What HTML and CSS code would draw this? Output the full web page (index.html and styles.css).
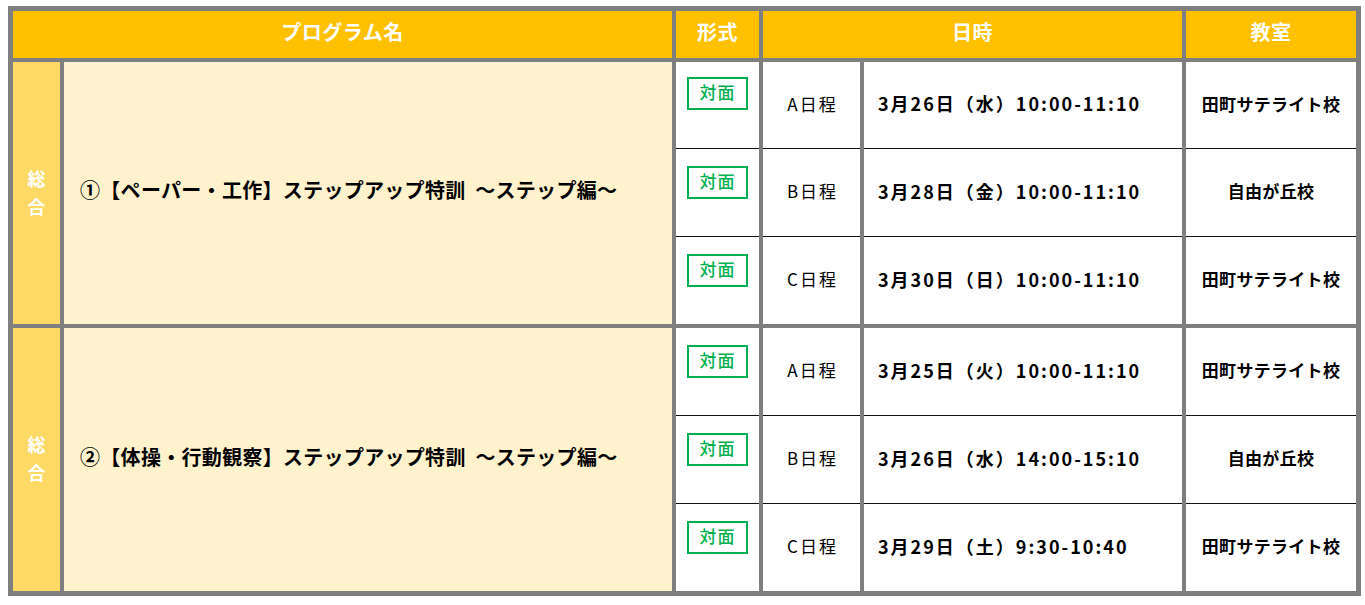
FILE: index.html
```html
<!DOCTYPE html>
<html lang="ja">
<head>
<meta charset="utf-8">
<link rel="stylesheet" href="styles.css">
</head>
<body>
<div class="sched">
  <div class="hd hd-name">プログラム名</div>
  <div class="hd hd-fmt">形式</div>
  <div class="hd hd-date">日時</div>
  <div class="hd hd-room">教室</div>

  <div class="gap g1"></div>

  <div class="cat c1"><span>総</span><span>合</span></div>
  <div class="name n1">①【ペーパー・工作】ステップアップ特訓&nbsp;&nbsp;～ステップ編～</div>

  <div class="cell fmt r1"><span class="badge">対面</span></div>
  <div class="cell day r1">A日程</div>
  <div class="cell time r1">3月26日（水）10:00-11:10</div>
  <div class="cell room r1">田町サテライト校</div>

  <div class="cell fmt r2 line"><span class="badge">対面</span></div>
  <div class="cell day r2 line">B日程</div>
  <div class="cell time r2 line">3月28日（金）10:00-11:10</div>
  <div class="cell room r2 line">自由が丘校</div>

  <div class="cell fmt r3 line"><span class="badge">対面</span></div>
  <div class="cell day r3 line">C日程</div>
  <div class="cell time r3 line">3月30日（日）10:00-11:10</div>
  <div class="cell room r3 line">田町サテライト校</div>

  <div class="gap g2"></div>

  <div class="cat c2"><span>総</span><span>合</span></div>
  <div class="name n2">②【体操・行動観察】ステップアップ特訓&nbsp;&nbsp;～ステップ編～</div>

  <div class="cell fmt r4"><span class="badge">対面</span></div>
  <div class="cell day r4">A日程</div>
  <div class="cell time r4">3月25日（火）10:00-11:10</div>
  <div class="cell room r4">田町サテライト校</div>

  <div class="cell fmt r5 line"><span class="badge">対面</span></div>
  <div class="cell day r5 line">B日程</div>
  <div class="cell time r5 line">3月26日（水）14:00-15:10</div>
  <div class="cell room r5 line">自由が丘校</div>

  <div class="cell fmt r6 line"><span class="badge">対面</span></div>
  <div class="cell day r6 line">C日程</div>
  <div class="cell time r6 line">3月29日（土）9:30-10:40</div>
  <div class="cell room r6 line">田町サテライト校</div>
</div>
</body>
</html>
```

FILE: styles.css
```css
html, body {
  margin: 0;
  padding: 0;
  background: #ffffff;
}
body {
  padding: 6px 0 0 8px;
  font-family: "Noto Sans CJK JP", "Noto Sans", sans-serif;
  color: #000;
}
.sched {
  width: 1343px;
  border: 5px solid #7f7f7f;
  background: #7f7f7f;
  display: grid;
  grid-template-columns: 47px 608px 83px 97px 318px 170px;
  grid-template-rows: 47px 4px 86px 88px 88px 4px 87px 88px 88px;
  column-gap: 4px;
}
.hd {
  background: #ffc000;
  color: #fff;
  font-weight: bold;
  font-size: 20px;
  display: flex;
  align-items: center;
  justify-content: center;
  padding-bottom: 7px;
  box-sizing: border-box;
  letter-spacing: 0.5px;
}
.hd-name { grid-column: 1 / 3; grid-row: 1; }
.hd-fmt { grid-column: 3; grid-row: 1; }
.hd-date { grid-column: 4 / 6; grid-row: 1; }
.hd-room { grid-column: 6; grid-row: 1; }
.gap { grid-column: 1 / -1; }
.g1 { grid-row: 2; }
.g2 { grid-row: 6; }
.cat {
  grid-column: 1;
  background: #ffd966;
  color: #fff;
  font-weight: bold;
  font-size: 18px;
  display: flex;
  flex-direction: column;
  align-items: center;
  justify-content: center;
  line-height: 28px;
  padding-bottom: 3px;
  box-sizing: border-box;
}
.c1 { grid-row: 3 / 6; }
.c2 { grid-row: 7 / 10; }
.name {
  grid-column: 2;
  background: #fff2cc;
  font-weight: bold;
  font-size: 20px;
  display: flex;
  align-items: center;
  padding-left: 16px;
  padding-bottom: 7px;
  box-sizing: border-box;
  letter-spacing: 0.3px;
}
.n1 { grid-row: 3 / 6; }
.n2 { grid-row: 7 / 10; }
.cell {
  background: #fff;
  display: flex;
  align-items: center;
  box-sizing: border-box;
  padding-bottom: 4px;
}
.cell.line { border-top: 1px solid #111; }
.r1 { grid-row: 3; }
.r2 { grid-row: 4; }
.r3 { grid-row: 5; }
.r4 { grid-row: 7; }
.r5 { grid-row: 8; }
.r6 { grid-row: 9; }
.fmt {
  grid-column: 3;
  align-items: flex-start;
  justify-content: center;
  padding-top: 17px;
}
.r1.fmt { padding-top: 15px; }
.badge {
  display: block;
  width: 61px;
  height: 33px;
  box-sizing: border-box;
  border: 2px solid #00b050;
  color: #00b050;
  font-size: 17px;
  font-weight: 500;
  text-align: center;
  line-height: 26px;
  letter-spacing: 1px;
}
.day {
  grid-column: 4;
  justify-content: center;
  font-size: 17px;
  letter-spacing: 2px;
  padding-left: 2px;
}
.time {
  grid-column: 5;
  padding-left: 14px;
  font-size: 18px;
  font-weight: bold;
  letter-spacing: 2px;
}
.room {
  grid-column: 6;
  justify-content: center;
  font-size: 17px;
  font-weight: bold;
  letter-spacing: 0.3px;
}
```
